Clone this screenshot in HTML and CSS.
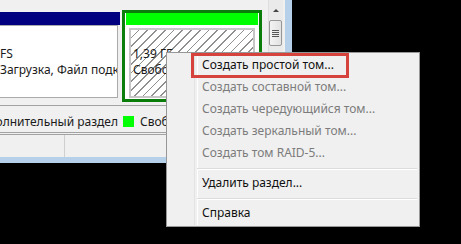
FILE: index.html
```html
<!DOCTYPE html>
<html lang="ru">

<head>
    <meta charset="UTF-8">
    <meta name="viewport" content="width=device-width, initial-scale=1.0">
    <title>Управление дисками</title>

    <link rel="stylesheet" href="styles.css">
</head>

<body>
    <div class="window">
        <div class="graph">
            <div class="disk-row">
                <div class="part part-primary">
                    <div class="part-head"></div>
                    <div class="part-body">
                        <p>FS</p>
                        <p>Загрузка, Файл подкачки</p>
                    </div>
                </div>
                <div class="extended">
                    <div class="part part-free">
                        <div class="part-head"></div>
                        <div class="part-body hatched">
                            <p>1,39 ГБ</p>
                            <p>Свободно</p>
                        </div>
                    </div>
                </div>
            </div>
            <div class="scrollbar">
                <div class="scroll-up"><span class="arrow"></span></div>
                <div class="scroll-thumb">
                    <span></span><span></span><span></span><span></span>
                </div>
            </div>
        </div>

        <div class="legend">
            <div class="legend-item clip">
                <span>Дополнительный раздел</span>
            </div>
            <div class="legend-item">
                <span class="swatch swatch-free"></span>
                <span>Свободно</span>
            </div>
        </div>

        <div class="statusbar">
            <div class="status-cell"></div>
            <div class="status-cell wide"></div>
        </div>
    </div>

    <ul class="context-menu">
        <li class="menu-item">Создать простой том...</li>
        <li class="menu-item disabled">Создать составной том...</li>
        <li class="menu-item disabled">Создать чередующийся том...</li>
        <li class="menu-item disabled">Создать зеркальный том...</li>
        <li class="menu-item disabled">Создать том RAID-5...</li>
        <li class="menu-sep"></li>
        <li class="menu-item">Удалить раздел...</li>
        <li class="menu-sep"></li>
        <li class="menu-item">Справка</li>
    </ul>

    <div class="highlight"></div>
</body>

</html>
```

FILE: styles.css
```css
* {
    padding: 0;
    margin: 0;
    box-sizing: border-box;
}

body {
    position: relative;
    width: 461px;
    height: 244px;
    overflow: hidden;
    background-color: #000;
    font-family: "Noto Sans", "DejaVu Sans", sans-serif;
    font-size: 12px;
    color: #1b1b1b;
}

li {
    list-style: none;
}

/* window behind the menu */

.window {
    width: 292px;
    height: 163px;
    display: flex;
    flex-direction: column;
    background-color: #f0f0f0;
    border-right: 7px solid #b7d0ea;
    border-bottom: 6px solid #b7d0ea;
}

.graph {
    height: 106px;
    display: flex;
    border-bottom: 1px solid #a3a3a3;
}

.disk-row {
    flex: 1;
    display: flex;
    align-items: flex-start;
    gap: 2px;
    padding-top: 10px;
    overflow: hidden;
}

.part-body p {
    height: 16px;
    line-height: 16px;
    white-space: nowrap;
}

.part-primary {
    width: 121px;
    margin-left: -1px;
    margin-top: 2px;
}

.part-primary .part-head {
    height: 13px;
    background-color: #000080;
}

.part-primary .part-body {
    height: 73px;
    margin-right: 2px;
    padding-top: 20px;
    overflow: hidden;
    background-color: #fff;
    border: 1px solid #aaa;
}

.extended {
    width: 140px;
    height: 92px;
    padding: 0 1px 1px;
    background-color: #fff;
    border: 3px solid #0b7d0b;
}

.part-free .part-head {
    height: 12px;
    background-color: #00ff00;
}

.part-free .part-body {
    height: 70px;
    margin: 3px 3px 0;
    padding: 16px 0 0 2px;
    overflow: hidden;
    border: 2px solid #c6c6c6;
}

.hatched {
    background: repeating-linear-gradient(135deg, #fff 0 5px, #909090 5px 6.2px);
}

.scrollbar {
    width: 15px;
    margin-right: 2px;
    background-color: #eaeaea;
    border-left: 1px solid #dedede;
}

.scroll-up {
    height: 19px;
    display: flex;
    justify-content: center;
    padding-top: 9px;
}

.arrow {
    width: 0;
    height: 0;
    border-left: 3px solid transparent;
    border-right: 3px solid transparent;
    border-bottom: 3px solid #444;
}

.scroll-thumb {
    height: 26px;
    margin: 1px 1px 0 0;
    display: flex;
    flex-direction: column;
    align-items: center;
    justify-content: center;
    gap: 1px;
    background: linear-gradient(to right, #f3f3f3, #e2e2e2);
    border: 1px solid #979797;
    border-radius: 2px;
}

.scroll-thumb span {
    width: 7px;
    height: 1px;
    background-color: #555;
}

.legend {
    height: 29px;
    display: flex;
    align-items: center;
    padding-top: 4px;
    border-bottom: 3px double #a3a3a3;
}

.legend-item {
    display: flex;
    align-items: center;
    white-space: nowrap;
}

.legend-item.clip {
    width: 118px;
    justify-content: flex-end;
    overflow: hidden;
}

.swatch {
    width: 11px;
    height: 11px;
    margin: 0 6px 0 5px;
}

.swatch-free {
    background-color: #00ff00;
}

.statusbar {
    flex: 1;
    display: flex;
}

.status-cell {
    width: 65px;
    border-right: 1px solid #cfcfcf;
}

.status-cell.wide {
    flex: 1;
}

/* context menu */

.context-menu {
    position: absolute;
    left: 166px;
    top: 52px;
    width: 254px;
    height: 175px;
    padding: 1px 2px;
    background-color: #f0f0f0;
    border: 1px solid #979797;
}

.context-menu::before {
    content: "";
    position: absolute;
    left: 27px;
    top: 1px;
    bottom: 1px;
    width: 2px;
    border-left: 1px solid #e2e3e3;
    border-right: 1px solid #fff;
}

.menu-item {
    position: relative;
    height: 22px;
    line-height: 22px;
    padding-left: 33px;
    white-space: nowrap;
    color: #111;
}

.menu-item.disabled {
    color: #7c7c7c;
}

.menu-sep {
    position: relative;
    height: 2px;
    margin: 4px 0 2px 28px;
    border-top: 1px solid #dcdcdc;
    border-bottom: 1px solid #fff;
}

.highlight {
    position: absolute;
    left: 191px;
    top: 53px;
    width: 158px;
    height: 25px;
    border: 3px solid #d6433d;
}
```
